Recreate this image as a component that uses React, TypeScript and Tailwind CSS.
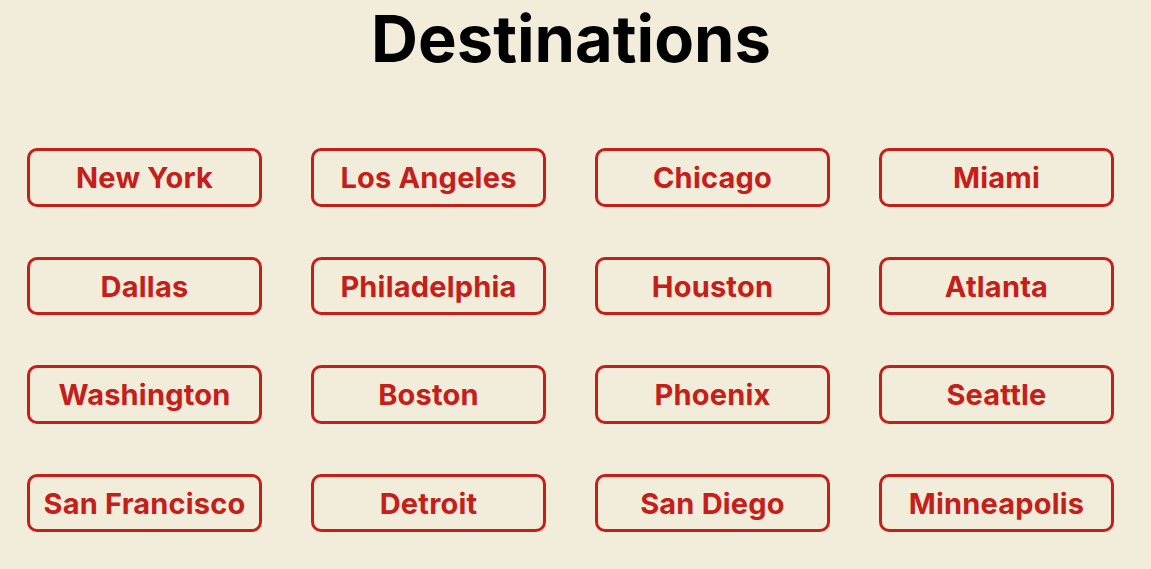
const cities = [
  'New York',
  'Los Angeles',
  'Chicago',
  'Miami',
  'Dallas',
  'Philadelphia',
  'Houston',
  'Atlanta',
  'Washington',
  'Boston',
  'Phoenix',
  'Seattle',
  'San Francisco',
  'Detroit',
  'San Diego',
  'Minneapolis',
];

export default function App() {
  return (
    <div
      className="min-h-screen bg-[#f2ecdb]"
      style={{ fontFamily: 'Inter, "Noto Sans", sans-serif' }}
    >
      <div className="w-[1142px]">
        <h1 className="pt-[6px] text-center text-[65px] font-bold leading-[66px] text-black">
          Destinations
        </h1>
        <div className="mt-[76px] grid grid-cols-[repeat(4,235px)] gap-x-[49px] gap-y-[50px] pl-[27px]">
          {cities.map((city) => (
            <button
              key={city}
              className="flex h-[58.5px] items-center justify-center rounded-[10px] border-[3px] border-[#c4201a] pt-[1px] text-[29px] font-bold tracking-[0.2px] text-[#c4201a]"
            >
              {city}
            </button>
          ))}
        </div>
      </div>
    </div>
  );
}
